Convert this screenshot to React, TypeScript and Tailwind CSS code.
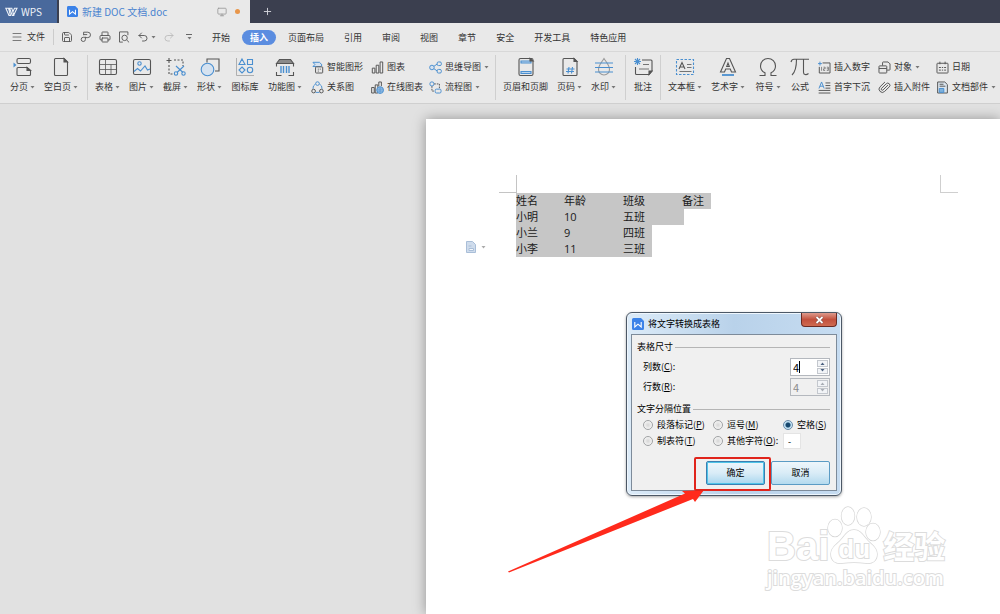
import type { ReactNode } from "react";
import { Menu, Monitor, Paperclip, Plus, Printer, Redo2, Save, Undo2 } from "lucide-react";

const INK = "#555555";
const BLUE = "#4a8fd0";

function Caret({ className = "text-[#777777]" }: { className?: string }) {
  return (
    <svg viewBox="0 0 5 3" width={5} height={3} className={`shrink-0 ${className}`}>
      <path d="M.5 0h4L2.5 2.5z" fill="currentColor" />
    </svg>
  );
}

function Glyph({ size = 20, children }: { size?: number; children: ReactNode }) {
  return (
    <svg
      viewBox="0 0 20 20"
      width={size}
      height={size}
      fill="none"
      stroke={INK}
      strokeWidth={size < 20 ? 1.5 : 1.1}
      className="shrink-0"
    >
      {children}
    </svg>
  );
}

const icons = {
  pageBreak: (
    <>
      <rect x="4" y="1.500" width="13.500" height="5" rx="1.500" />
      <path d="M4 17.500V11.500a1 1 0 0 1 1-1h9l3.500 3v4a1 1 0 0 1-1 1H5a1 1 0 0 1-1-1z" />
      <path d="M14 10.500v3h3.500z" fill={INK} />
      <path d="M.5 5.500v5l3-2.500z" fill={BLUE} stroke="none" />
    </>
  ),
  blank: (
    <>
      <path d="M4.500 1.500H13l3.500 3.500v12.500a1 1 0 0 1-1 1h-11a1 1 0 0 1-1-1v-15a1 1 0 0 1 1-1z" />
      <path d="M13 1.500V5h3.500z" fill={INK} />
    </>
  ),
  table: (
    <>
      <rect x="1.500" y="2.500" width="17" height="15" rx="1.500" />
      <path d="M1.500 7.500h17M1.500 12.500h17M7.500 2.500v15M13 7.500v10" strokeWidth=".8" />
    </>
  ),
  picture: (
    <>
      <rect x="1.500" y="2.500" width="17" height="15" rx="1.500" />
      <circle cx="7.500" cy="6.500" r="1.700" stroke={BLUE} />
      <path d="M2 14.500l3.500-3 3 2.500L13 9l2.500 4 2.500-1" stroke={BLUE} />
    </>
  ),
  screenshot: (
    <>
      <path d="M3 1v5M.5 3.500h5" />
      <path d="M8 3h9v6M3 8v9h6" strokeDasharray="2 1.500" />
      <path d="M10 9l7 6.500M18 9l-7 6.500" stroke={BLUE} />
      <circle cx="10" cy="16.500" r="1.700" stroke={BLUE} />
      <circle cx="17.500" cy="16.500" r="1.700" stroke={BLUE} />
    </>
  ),
  shapes: (
    <>
      <path d="M7 5.500V2h12v12h-4" />
      <circle cx="7.500" cy="12.500" r="6.300" stroke={BLUE} fill="#d5e2f0" />
    </>
  ),
  iconLib: (
    <g stroke={BLUE}>
      <path d="M1.500 1v17.500H19" stroke="#a0a0a0" strokeWidth=".8" />
      <path d="M7 2l3 5.500H4zM12.500 2.500h5v5h-5zM7 10l3 3-3 3-3-3z" />
      <circle cx="15" cy="13" r="2.700" />
    </g>
  ),
  barcode: (
    <>
      <path d="M1.500 6.500L4.500 2.500h11l3 4z" fill="#8a8a8a" />
      <path d="M1.500 6.500v3M18.500 6.500v3M1.500 15v3.500h5M18.500 15v3.500h-5" />
      <path d="M6 9v7M8.500 9v7M11.500 9v7M14 9v7" stroke={BLUE} strokeWidth="1.400" />
    </>
  ),
  smart: (
    <>
      <path d="M3 2h10l4 4-2 2.500H3l3-3z" stroke={BLUE} fill="#d5e2f0" />
      <rect x="7" y="9" width="11" height="9.500" rx="1" fill="#e9e9e9" />
      <path d="M10.500 12.500h1.500M13.500 12.500h1.500M10.500 15.500h1.500" />
    </>
  ),
  relation: (
    <>
      <path d="M7 4.500A8 8 0 0 0 3 12M13 4.500a8 8 0 0 1 4 7.500M7 17.500h6" stroke={BLUE} />
      <circle cx="10" cy="4" r="2.800" stroke={BLUE} />
      <circle cx="4" cy="15.500" r="2.800" />
      <circle cx="16" cy="15.500" r="2.800" />
    </>
  ),
  chart: <path d="M2 11h4v7.500H2zM8 6.500h4v12H8zM14 1.500h4v17h-4z" />,
  onlineChart: (
    <>
      <path d="M1 10h4v8.500H1zM6.500 6h4v12.500h-4zM12 8V1.500h4V8" />
      <circle cx="14" cy="14" r="5.200" fill="#9fc4e6" stroke={BLUE} />
      <path d="M9 12.500h10M9 15.500h10M14 9v10" stroke={BLUE} strokeWidth="1" />
    </>
  ),
  mindMap: (
    <g stroke={BLUE}>
      <path d="M7 8.500l6-4M7 11.500l6 4" />
      <circle cx="4.500" cy="10" r="3.500" fill="#d5e2f0" />
      <rect x="12.500" y="1.500" width="6.500" height="5.500" rx="2" />
      <rect x="12.500" y="13" width="6.500" height="5.500" rx="2" />
    </g>
  ),
  flow: (
    <>
      <circle cx="4.500" cy="4.500" r="3.200" stroke={BLUE} />
      <path d="M8 4.500h8v7M4.500 8v7.500H9" strokeDasharray="2.500 1.500" />
      <rect x="9.500" y="12.500" width="9" height="6" rx="2" stroke={BLUE} />
    </>
  ),
  header: (
    <>
      <rect x="3" y="1.500" width="14" height="17" rx="1.500" />
      <path d="M5 4h10v2H5zM5 14.500h10v2H5z" stroke={BLUE} fill="#bcd5ec" />
      <path d="M14 1.500V4h3z" fill={INK} />
    </>
  ),
  pageNo: (
    <>
      <path d="M4 1.500h10L17 4.500v13a1 1 0 0 1-1 1H4a1 1 0 0 1-1-1v-15a1 1 0 0 1 1-1z" />
      <path d="M14 1.500v3h3z" fill={INK} />
      <path d="M9 10l-1 6.500M12.500 10l-1 6.500M6.500 12h8M6 14.500h8" stroke={BLUE} />
    </>
  ),
  watermark: (
    <>
      <path d="M10 1.500c2.500 4 5.500 7 5.500 11a5.500 5.500 0 0 1-11 0c0-4 3-7 5.500-11z" stroke="#9a9a9a" />
      <path d="M1 6h18M1 10.500h18M1 15h18" stroke={BLUE} />
    </>
  ),
  comment: (
    <>
      <path d="M9 3h9a1 1 0 0 1 1 1v10l-3 3.500H3.500a1 1 0 0 1-1-1V10" />
      <path d="M19 14h-3v3.500z" fill={INK} />
      <path d="M10 7.500h6M6 12h10" strokeWidth=".8" />
      <path d="M4.500 1v7M1 4.500h7M2 2l5 5M7 2L2 7" stroke={BLUE} />
    </>
  ),
  textBox: (
    <>
      <rect x="1.500" y="2.500" width="17" height="15" stroke={BLUE} strokeDasharray="2.500 1.500" />
      <path d="M4 12L7 5.500l3 6.500M5 10h4" />
      <path d="M12 7.500h4.500M12 10.500h4.500M4.500 14.500h12" strokeWidth=".8" />
    </>
  ),
  wordArt: (
    <>
      <path d="M8.500 1.500h3L17.500 15h-4l-1.200-3H7.700l-1.200 3h-4zM8.700 9.500h2.600L10 6z" />
      <path d="M4 18h12" stroke={BLUE} strokeWidth="1.800" />
    </>
  ),
  omega: <path d="M1.500 18.500H7v-2.700C4 14.500 2.500 12 2.500 9a7.500 7.500 0 0 1 15 0c0 3-1.500 5.500-4.500 6.800v2.700h5.500" />,
  pi: <path d="M1 5c.5-2 1.500-2.800 3-2.800h15M6.500 2.200c0 6-.5 12-4.500 15.800M13.500 2.200v13c0 2.500 2.500 3.300 5 1.300" />,
  number: (
    <>
      <path d="M7 3h11.500v15.500H2V9" />
      <path d="M3 1v6M0 4h6" stroke={BLUE} />
      <path d="M5.500 9v6M8.500 9.500h2.500v2.500H8.500v2.500H11M13.500 9.500H16v5h-2.500M13.500 12H16" strokeWidth="1" />
    </>
  ),
  dropCap: (
    <>
      <path d="M1.500 11.500L5.500 1.500l4 10M3 8h5" stroke={BLUE} />
      <path d="M11.500 3H19M11.500 7H19M11.500 11H19M1 14.500h18M1 18.500h18" />
    </>
  ),
  object: (
    <>
      <path d="M7 7V2.500a1 1 0 0 1 1-1h7.500l3 3V13a1 1 0 0 1-1 1H14" />
      <rect x="1.500" y="7.500" width="12" height="11" rx="1" />
      <path d="M1.500 11.500h12" />
    </>
  ),
  date: (
    <>
      <rect x="1.500" y="3.500" width="17" height="15" rx="1" />
      <path d="M6 1v4M14 1v4" />
      <path d="M4.500 10h3M9 10h2M12.500 10h3M4.500 14h3M9 14h2M12.500 14h3" />
    </>
  ),
  parts: (
    <>
      <path d="M2.500 1.500h11l4 4v13h-15z" fill="#dce6ef" />
      <path d="M5.500 5h6M5.500 8h9" />
      <path d="M5 11.500h7v6H5z" fill="#7fb2dc" stroke={BLUE} />
    </>
  ),
  brush: (
    <>
      <path d="M6 2h7a4.500 4.500 0 0 1 0 9H9v3a3.500 3.500 0 1 1-3.500-3.500H10M6 6h6" />
      <path d="M6 2v5" />
    </>
  ),
  preview: (
    <>
      <path d="M8 18.500H2.500v-17h14V7" />
      <circle cx="11" cy="11.500" r="4.500" />
      <path d="M14.500 15l4 4" />
    </>
  ),
};

type IconName = keyof typeof icons;

function Tool({ icon, label, drop, width }: { icon: IconName; label: string; drop?: boolean; width?: string }) {
  return (
    <button className={`flex shrink-0 flex-col items-center gap-1 ${width ?? ""}`}>
      <Glyph>{icons[icon]}</Glyph>
      <span className="flex items-center gap-0.5 whitespace-nowrap leading-3">
        {label}
        {drop && <Caret />}
      </span>
    </button>
  );
}

function SmallTool({ icon, label, drop }: { icon: IconName | "clip"; label: string; drop?: boolean }) {
  return (
    <button className="flex h-5 items-center gap-[3px] whitespace-nowrap">
      {icon === "clip" ? (
        <Paperclip size={13} strokeWidth={1.8} color={INK} className="shrink-0 -scale-x-100 rotate-90" />
      ) : (
        <Glyph size={13}>{icons[icon]}</Glyph>
      )}
      {label}
      {drop && <Caret />}
    </button>
  );
}

function WpsMark({ className }: { className: string }) {
  return (
    <svg viewBox="0 0 13 10" className={className} fill="none" stroke="currentColor" strokeWidth="1.100">
      <path d="M.8 1.200h2.700l2 7.300H4zM4.500 1.200h2.300l2 7.300H7.300zM8.500 8.500L12 1.200H9.500L7.800 5" />
    </svg>
  );
}

function DocBadge({ className }: { className: string }) {
  return (
    <svg viewBox="0 0 12 12" className={className}>
      <path d="M1.500 0H9l3 3v7.500a1.500 1.500 0 0 1-1.500 1.500h-9A1.500 1.500 0 0 1 0 10.500v-9A1.500 1.500 0 0 1 1.500 0z" fill="#3b82e8" />
      <path d="M2.800 4v5L6 6.200 9.200 9V4" fill="none" stroke="#fff" strokeWidth="1.100" />
    </svg>
  );
}

const menus = ["开始", "插入", "页面布局", "引用", "审阅", "视图", "章节", "安全", "开发工具", "特色应用"];

const rows = [
  { cells: ["姓名", "年龄", "班级", "备注"], end: "pr-[7px]" },
  { cells: ["小明", "10", "五班"], end: "pr-[39px]" },
  { cells: ["小兰", "9", "四班"], end: "pr-[7px]" },
  { cells: ["小李", "11", "三班"], end: "pr-[7px]" },
];

function TitleBar() {
  return (
    <header className="flex h-[23px] bg-[#3b3f4f] text-[10px]">
      <button className="mr-0.5 flex w-[57px] items-center gap-[3px] bg-[#49699c] pl-[5px] text-[#eef2f8]">
        <WpsMark className="h-2.5 w-[13px]" />
        WPS
      </button>
      <div className="flex w-[191px] items-center bg-[#e9e9e9] pr-2.5 pl-2 text-[#4a84d0]">
        <DocBadge className="mr-1 size-[11px]" />
        <span className="flex-1">新建 DOC 文档.doc</span>
        <Monitor size={10} color="#999999" />
        <span className="ml-2 size-[5px] rounded-full bg-[#e8964a]" />
      </div>
      <button className="px-3 text-[#d5d7dd]" aria-label="+">
        <Plus size={11} />
      </button>
    </header>
  );
}

function MenuBar() {
  return (
    <nav className="flex h-[29px] items-center border-b border-[#d9d9d9] pl-[11px]">
      <button className="flex h-4 items-center gap-1 border-r border-[#cccccc] pr-2">
        <Menu size={12} strokeWidth={1.5} color={INK} />
        文件
      </button>
      <div className="flex w-[150px] items-center gap-[7px] pl-[7px] text-[#555555]">
        <button><Save size={12} strokeWidth={1.8} /></button>
        <button><Glyph size={12}>{icons.brush}</Glyph></button>
        <button><Printer size={12} strokeWidth={1.8} /></button>
        <button><Glyph size={12}>{icons.preview}</Glyph></button>
        <button className="flex items-center gap-0.5">
          <Undo2 size={12} strokeWidth={1.8} />
          <Caret />
        </button>
        <button><Redo2 size={12} strokeWidth={1.8} color="#bbbbbb" /></button>
        <button className="ml-1 flex flex-col items-center gap-0.5">
          <span className="h-px w-1.5 bg-[#666666]" />
          <Caret />
        </button>
      </div>
      <div className="flex gap-1">
        {menus.map((m) => (
          <button
            key={m}
            className={
              m === "插入"
                ? "h-[15px] rounded-full bg-[#5b8de0] px-2 leading-[15px] font-bold whitespace-nowrap text-white"
                : "h-[15px] px-2 leading-[15px] whitespace-nowrap"
            }
          >
            {m}
          </button>
        ))}
      </div>
    </nav>
  );
}

function Ribbon() {
  return (
    <div className="flex h-[52px] items-stretch overflow-hidden border-b border-[#cfcfcf] py-[3px] pl-2.5 shadow-[0_1px_2px_rgba(0,0,0,0.1)]">
      <div className="flex gap-[9px] border-r border-[#cfcfcf] pt-0.5 pr-[9px]">
        <Tool icon="pageBreak" label="分页" drop width="w-[25px]" />
        <Tool icon="blank" label="空白页" drop width="w-[34px]" />
      </div>
      <div className="flex gap-[9px] border-r border-[#cfcfcf] pt-0.5 pr-1.5 pl-[7px]">
        <Tool icon="table" label="表格" drop width="w-[25px]" />
        <Tool icon="picture" label="图片" drop width="w-[25px]" />
        <Tool icon="screenshot" label="截屏" drop width="w-[25px]" />
        <Tool icon="shapes" label="形状" drop width="w-[25px]" />
        <Tool icon="iconLib" label="图标库" width="w-[28px]" />
        <Tool icon="barcode" label="功能图" drop width="w-[34px]" />
        <div className="flex gap-1.5">
          <div className="w-[54px]">
            <SmallTool icon="smart" label="智能图形" />
            <SmallTool icon="relation" label="关系图" />
          </div>
          <div className="w-[52px]">
            <SmallTool icon="chart" label="图表" />
            <SmallTool icon="onlineChart" label="在线图表" />
          </div>
          <div className="w-[60px]">
            <SmallTool icon="mindMap" label="思维导图" drop />
            <SmallTool icon="flow" label="流程图" drop />
          </div>
        </div>
      </div>
      <div className="flex gap-[9px] border-r border-[#cfcfcf] pt-0.5 pr-[9px] pl-[7px]">
        <Tool icon="header" label="页眉和页脚" />
        <Tool icon="pageNo" label="页码" drop width="w-[25px]" />
        <Tool icon="watermark" label="水印" drop width="w-[25px]" />
      </div>
      <div className="flex border-r border-[#cfcfcf] px-2 pt-0.5">
        <Tool icon="comment" label="批注" width="w-[18px]" />
      </div>
      <div className="flex gap-[9px] pt-0.5 pl-[7px]">
        <Tool icon="textBox" label="文本框" drop width="w-[34px]" />
        <Tool icon="wordArt" label="艺术字" drop width="w-[34px]" />
        <Tool icon="omega" label="符号" drop width="w-[28px]" />
        <Tool icon="pi" label="公式" width="w-[18px]" />
        <div className="flex gap-1.5">
          <div className="w-[54px]">
            <SmallTool icon="number" label="插入数字" />
            <SmallTool icon="dropCap" label="首字下沉" />
          </div>
          <div className="w-[52px]">
            <SmallTool icon="object" label="对象" drop />
            <SmallTool icon="clip" label="插入附件" />
          </div>
          <div className="w-[60px]">
            <SmallTool icon="date" label="日期" />
            <SmallTool icon="parts" label="文档部件" drop />
          </div>
        </div>
      </div>
    </div>
  );
}

function Spinner({ id, label, hotkey, disabled }: { id: string; label: string; hotkey: string; disabled?: boolean }) {
  const arrow =
    "flex flex-1 items-center justify-center border border-[#c4c8ce] bg-[#f2f4f7] text-[#4a6080] disabled:text-[#a8adb4]";
  return (
    <div className="flex h-5 items-center justify-between pl-1.5">
      <label htmlFor={id}>
        {label}(<u>{hotkey}</u>):
      </label>
      <div className={`relative flex h-[18px] w-10 border border-[#b4b8be] p-px ${disabled ? "bg-[#f0f0f0]" : "bg-white"}`}>
        <input
          id={id}
          defaultValue="4"
          disabled={disabled}
          className="w-0 flex-1 pl-px text-[11px] outline-none disabled:text-[#8a8a8a]"
        />
        {!disabled && <span className="absolute top-0.5 left-2 h-3 w-px bg-black" />}
        <div className="flex w-[11px] flex-col gap-px">
          <button type="button" aria-label="增加" disabled={disabled} className={arrow}>
            <Caret className="rotate-180 text-current" />
          </button>
          <button type="button" aria-label="减少" disabled={disabled} className={arrow}>
            <Caret className="text-current" />
          </button>
        </div>
      </div>
    </div>
  );
}

function Option({ label, hotkey, tail, checked }: { label: string; hotkey: string; tail?: string; checked?: boolean }) {
  return (
    <label className="flex h-4 items-center gap-1 whitespace-nowrap">
      <input
        type="radio"
        name="separator"
        defaultChecked={checked}
        className="size-2.5 shrink-0 appearance-none rounded-full border border-[#a0a2a4] bg-[radial-gradient(circle,#d6d6d6_0%,#f8f8f8_80%)] checked:border-[#6a8aa8] checked:bg-[radial-gradient(circle,#16476e_35%,#c4e4f6_55%)]"
      />
      <span>
        {label}(<u>{hotkey}</u>){tail}
      </span>
    </label>
  );
}

function Legend({ text }: { text: string }) {
  return (
    <div className="flex h-4 items-center gap-0.5">
      {text}
      <span className="h-px flex-1 bg-[#b5b5b5]" />
    </div>
  );
}

function ConvertDialog() {
  return (
    <section className="absolute top-[193px] left-[200px] w-[216px] rounded-md border border-[#4c5866] bg-linear-to-r from-[#dcebf8] via-[#b9d2ea] to-[#c6dcf1] px-1 pb-1 text-black shadow-[inset_0_0_0_1px_#eef6fd,0_1px_3px_rgba(0,0,0,0.35)]">
      <div className="flex h-[21px] items-center">
        <DocBadge className="mr-1 ml-px size-3" />
        <h2 className="flex-1">将文字转换成表格</h2>
        <button
          aria-label="关闭"
          className="flex h-3.5 w-9 items-center justify-center self-start rounded-b border border-t-0 border-[#6b2a22] bg-linear-to-b from-[#dd9a8d] via-[#c2503d] via-50% to-[#cf6a50]"
        >
          <svg viewBox="0 0 9 8" width={9} height={8}>
            <path d="M1.500 1l6 6M7.500 1l-6 6" stroke="#6a3a36" strokeWidth="2.800" />
            <path d="M1.500 1l6 6M7.500 1l-6 6" stroke="#fff" strokeWidth="1.800" />
          </svg>
        </button>
      </div>
      <form className="border border-[#7d8b9a] bg-[#f0f0f0] pt-1 pr-1.5 pb-[5px] pl-[5px]" onSubmit={(e) => e.preventDefault()}>
        <Legend text="表格尺寸" />
        <div className="pt-0.5">
          <Spinner id="cols" label="列数" hotkey="C" />
          <Spinner id="rows" label="行数" hotkey="R" disabled />
        </div>
        <div className="pt-1">
          <Legend text="文字分隔位置" />
        </div>
        <div className="grid grid-cols-[70px_70px_1fr] pl-1.5">
          <Option label="段落标记" hotkey="P" />
          <Option label="逗号" hotkey="M" />
          <Option label="空格" hotkey="S" checked />
          <Option label="制表符" hotkey="T" />
          <Option label="其他字符" hotkey="O" tail=":" />
          <input aria-label="其他字符" defaultValue="-" className="h-4 w-[18px] border border-[#e4e4e4] bg-white pl-1 outline-none" />
        </div>
        <div className="flex justify-end gap-1.5 pt-3">
          <div className="relative">
            <button className="h-6 w-[59px] rounded-xs border border-[#3c7fb1] bg-linear-to-b from-[#eef6fb] via-[#d9ecf7] via-50% to-[#a8d6ee] shadow-[inset_0_0_0_1px_#4fc4e8]">
              确定
            </button>
            <span className="pointer-events-none absolute -top-1 -right-1.5 -bottom-1.5 -left-3 z-10 rounded-xs border-2 border-[#e0241b]" />
          </div>
          <button className="h-6 w-[59px] rounded-xs border border-[#5b9bc4] bg-linear-to-b from-[#eef6fb] via-[#d9ecf7] via-50% to-[#b4daee]">
            取消
          </button>
        </div>
      </form>
    </section>
  );
}

function Watermark() {
  return (
    <div className="absolute top-[387px] left-[341px] w-[180px] font-['Liberation_Sans','Noto_Sans_CJK_SC',sans-serif] font-bold text-white [-webkit-text-stroke:2px_#dcdcdc] [paint-order:stroke_fill]">
      <div className="flex h-[60px] items-end">
        <span className="text-[40px] leading-[40px]">Bai</span>
        <div className="relative mr-1 flex h-[60px] w-[50px] items-end justify-center">
          <svg viewBox="0 0 50 60" className="absolute inset-0 overflow-visible" fill="#fff" stroke="#d6d6d6" strokeWidth="1.400">
            <ellipse cx="6" cy="22" rx="7" ry="8.500" />
            <ellipse cx="19" cy="10" rx="6.500" ry="9" />
            <ellipse cx="35" cy="11" rx="7" ry="9" />
            <ellipse cx="44" cy="26" rx="7" ry="8.500" />
            <path d="M25 24c7 0 9 6 14 11 4 4 9 7 9 13 0 7-5 10-11 9-8-1-16-1-24 0-6 1-11-2-11-9 0-6 5-9 9-13 5-5 7-11 14-11z" />
          </svg>
          <span className="relative pb-1 text-[26px] leading-[26px]">du</span>
        </div>
        <span className="text-[31px] leading-[36px]">经验</span>
      </div>
      <div className="font-['Open_Sans',sans-serif] text-[20px] leading-6 font-semibold">jingyan.baidu.com</div>
    </div>
  );
}

export default function App() {
  return (
    <div className="flex min-h-screen flex-col overflow-hidden bg-[#e9e9e9] font-['Noto_Sans_CJK_SC',sans-serif] text-[9px] text-[#333333]">
      <TitleBar />
      <MenuBar />
      <Ribbon />
      <main className="flex flex-1 bg-[#e1e1e1] pt-[15px] pl-[426px]">
        <article className="relative flex-1 bg-white pt-14 shadow-[0_0_12px_rgba(0,0,0,0.35)]">
          <div className="flex h-[18px] justify-between pr-[42px] pl-[73px]">
            <span className="w-[18px] border-r border-b border-[#c4c4c4]" />
            <span className="w-[18px] border-b border-l border-[#cfcfcf]" />
          </div>
          <div className="flex flex-col items-start pl-[90px] font-['Open_Sans','Noto_Sans_CJK_SC',sans-serif] text-[11px] leading-4 text-[#1a1a1a]">
            {rows.map((row) => (
              <p key={row.cells[0]} className={`flex bg-[#c6c6c6] ${row.end}`}>
                {row.cells.map((cell, i) => (
                  <span
                    key={cell}
                    className={i === row.cells.length - 1 ? "" : i === 0 ? "w-12" : "w-[59px]"}
                  >
                    {cell}
                  </span>
                ))}
              </p>
            ))}
          </div>
          <button className="absolute top-[122px] left-10 flex items-center gap-[5px]" aria-label="粘贴选项">
            <svg viewBox="0 0 10 12" width={10} height={12} fill="#cfdcec" stroke="#a9bed8">
              <path d="M.5.500h6l3 3v8h-9z" />
              <path d="M2.500 5h3M3 9.500V7.500h4.500v2z" fill="#f5f8fc" />
            </svg>
            <Caret className="text-[#aaaaaa]" />
          </button>
          <ConvertDialog />
          <svg viewBox="0 0 204 86" width={204} height={86} className="pointer-events-none absolute top-[368px] left-[82px]" fill="#ff2a1c">
            <path d="M0 84.500L177 6.500l-3-2.500L196 3l-9 12-2-3L1 85.500z" />
          </svg>
          <Watermark />
        </article>
      </main>
    </div>
  );
}
